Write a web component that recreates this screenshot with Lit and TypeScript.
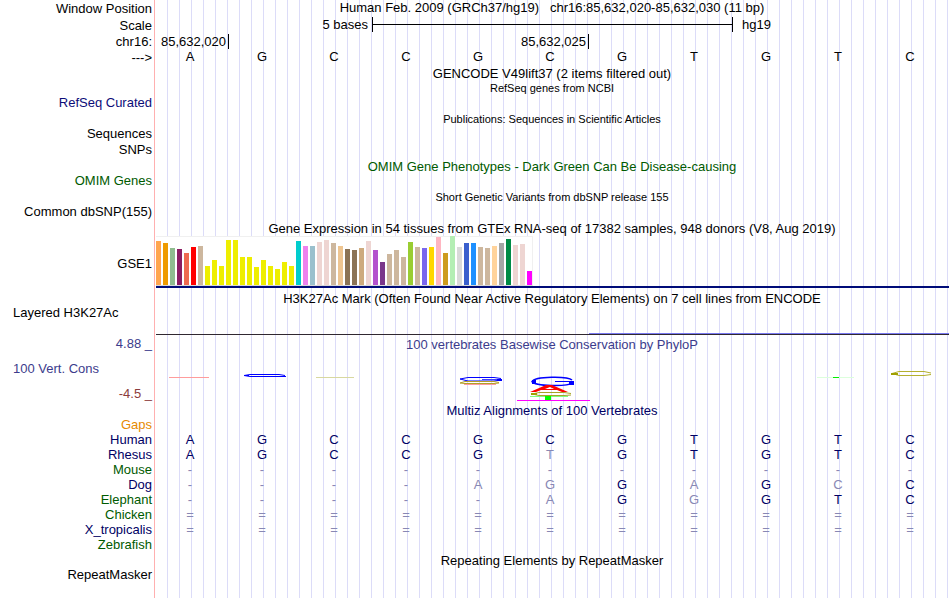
import { LitElement, html, css, svg } from "lit";
import { customElement } from "lit/decorators.js";
import { classMap } from "lit/directives/class-map.js";
import { styleMap } from "lit/directives/style-map.js";

const SEQUENCE = "AGCCGCGTGTC".split("");

// Median expression per tissue: [bar height, tissue colour]
const TISSUES: [number, string][] = [
  [44, "#ffa54f"], [42, "#ee9a00"], [37, "#8fbc8f"], [36, "#8b1c62"],
  [32, "#ee6a50"], [38, "#ff0000"], [39, "#cdb79e"], [19, "#eeee00"],
  [25, "#eeee00"], [19, "#eeee00"], [45, "#eeee00"], [45, "#eeee00"],
  [28, "#eeee00"], [28, "#eeee00"], [18, "#eeee00"], [25, "#eeee00"],
  [19, "#eeee00"], [16, "#eeee00"], [23, "#eeee00"], [19, "#eeee00"],
  [44, "#00cdcd"], [39, "#ee82ee"], [39, "#9ac0cd"], [43, "#eed5d2"],
  [45, "#eed5d2"], [42, "#cdb79e"], [39, "#eec591"], [36, "#8b7355"],
  [35, "#8b7355"], [37, "#cdaa7d"], [44, "#eed5d2"], [35, "#b452cd"],
  [23, "#7a378b"], [31, "#cdb79e"], [35, "#cdb79e"], [28, "#cdb79e"],
  [43, "#9acd32"], [38, "#cdb79e"], [37, "#7a67ee"], [38, "#ffd700"],
  [48, "#ffb6c1"], [32, "#cd9b1d"], [49, "#b4eeb4"], [38, "#d9d9d9"],
  [42, "#3a5fcd"], [42, "#1e90ff"], [38, "#cdb79e"], [37, "#cdb79e"],
  [39, "#ffd39b"], [42, "#a6a6a6"], [46, "#008b45"], [40, "#eed5d2"],
  [41, "#eed5d2"], [14, "#ff00ff"],
];

// Lower case marks a base that differs from the human one.
const SPECIES: [string, string, string][] = [
  ["Gaps", "orange", ""],
  ["Human", "navy", "AGCCGCGTGTC"],
  ["Rhesus", "navy", "AGCCGtGTGTC"],
  ["Mouse", "green", "-----------"],
  ["Dog", "navy", "----agGaGcC"],
  ["Elephant", "green", "-----aGgGTC"],
  ["Chicken", "green", "==========="],
  ["X_tropicalis", "navy", "==========="],
  ["Zebrafish", "green", ""],
];

@customElement("app-root")
export class AppRoot extends LitElement {
  static styles = css`
    :host {
      --label: 154px;
      --rest: 4px;
      display: block;
      min-height: 100vh;
      box-sizing: border-box;
      font: 13px/15px "Liberation Sans", Arial, Helvetica, sans-serif;
      color: #000;
      background:
        linear-gradient(#ffb0b0, #ffb0b0) var(--label) 0 / 1px 100% no-repeat,
        linear-gradient(#fff, #fff) 0 0 / calc(var(--label) + 12px) 100% no-repeat,
        linear-gradient(90deg, #dcdcf8 1px, transparent 1px) calc(var(--label) + 1px) 0 /
          calc((100% - var(--label) - var(--rest)) / 66) 100% repeat-x,
        #fff;
    }
    .row {
      display: grid;
      grid-template-columns: var(--label) minmax(0, 1fr);
      min-height: 15px;
    }
    .tall { min-height: 17px; }
    .medium { min-height: 16px; }
    .short { height: 14px; min-height: 0; }
    .label { padding-right: 2px; text-align: right; white-space: pre; }
    .low { padding-top: 1px; }
    .left { padding-left: 13px; text-align: left; }
    .title { text-align: center; white-space: pre; }
    .small { font-size: 11px; }
    .navy { color: #000064; }
    .blue { color: #0c0c78; }
    .slate { color: #3c3c8c; }
    .brown { color: #8c3c3c; }
    .green { color: #005a00; }
    .orange { color: #e68a00; }
    .bases {
      display: grid;
      grid-template-columns: repeat(11, minmax(0, 1fr)) var(--rest);
      text-align: center;
    }
    .unit { grid-column: 1 / span 3; text-align: right; padding-right: 2px; }
    .bar {
      grid-column: 4 / span 5;
      display: flex;
      align-items: center;
      height: 15px;
      margin: 0 -3px 0 2px;
      border: solid #000;
      border-width: 0 1px;
      box-sizing: border-box;
    }
    .bar::before { content: ""; flex: 1; height: 1px; background: #000; }
    .assembly { grid-column: 9 / span 3; text-align: left; padding-left: 12px; }
    .tick {
      grid-row: 1;
      text-align: right;
      padding-right: 2px;
      margin-right: -3px;
      border-right: 1px solid #000;
    }
    .first { grid-column: 1 / span 1; }
    .sixth { grid-column: 1 / span 6; }
    .gene { min-height: 55px; align-items: center; }
    .model {
      align-self: start;
      margin: 0 1px 0 2px;
      border-bottom: 2px solid #000c78;
    }
    .plot {
      display: flex;
      align-items: flex-end;
      gap: 2px;
      width: max-content;
      height: 50px;
      box-sizing: border-box;
      border: solid #f0f0f0;
      border-width: 1px 1px 1px 0;
      border-bottom-color: #d8d8d8;
      background: #fff;
    }
    .tissue { width: 5px; }
    .signal { min-height: 31px; }
    .wave {
      display: block;
      align-self: end;
      width: calc(100% - 3px);
      height: 30px;
      margin-left: 2px;
    }
    .cons { min-height: 50px; }
    .range {
      display: flex;
      flex-direction: column;
      justify-content: space-between;
      padding: 8px 0 2px;
    }
    .logo { display: block; width: calc(100% - var(--rest)); height: 50px; }
    .multiz { line-height: 16px; }
    table { width: 100%; table-layout: fixed; border-collapse: collapse; }
    .names { width: var(--label); }
    .spare { width: var(--rest); }
    th, td { padding: 0; height: 15px; font-weight: normal; text-align: center; }
    th { padding-right: 2px; text-align: right; }
    td { color: #000064; }
    .faint { color: #8888b4; }
  `;

  private heading(text: string, tone = "", size = "") {
    return html`<div class="row ${size}">
      <span></span>
      <div class="title ${tone}">${text}</div>
    </div>`;
  }

  private track(text: string, tone = "", size = "") {
    return html`<div class="row ${size}">
      <div class="label ${tone}">${text}</div>
    </div>`;
  }

  private logo() {
    return svg`
      <path d="M15 24.5H55" stroke="#ff9c9c" />
      <g fill="none" stroke="#0000ff">
        <path d="M131 22.5L125 21.5H96L90 22.5L96 23.5H112" />
        <path d="M112 23.5H132" />
        <path d="M347 25.5L340 24.5H314L306 26L314 28H340L347 27" />
        <path d="M328 26.5H348" stroke="#4040ff" />
        <path d="M418 27C414 23 381 23 378 28.5C381 33.500 414 33.500 418 30" stroke-width="1.500" />
        <path d="M401 28.5H420" />
      </g>
      <path d="M415 28h5v4h-5zM378 27h4v4h-4zM343 26h5v2h-5zM90 22h5v1h-5z" fill="#0000ff" />
      <path d="M162 24.5H200" stroke="#d8d8a0" />
      <path d="M345 29.5L340 28.5H311L306 30L311 30.5H340L345 30" fill="none" stroke="#b4a028" />
      <path d="M310 31.5H342" stroke="#ff9c9c" />
      <path d="M376 39l16-7h6l16 7h-6l-5-2h-16l-5 2zM391 36h9l-4-2z" fill="#ff0000" fill-rule="evenodd" />
      <path d="M417 40.500L410 39.500H385L378 41L385 42.500H410L417 42" fill="none" stroke="#a8a428" />
      <path d="M377 40h6v2h-6z" fill="#a0a000" />
      <path d="M376 43.5H414" stroke="#80ff80" />
      <path d="M391 43h6v4h-6z" fill="#00ff00" />
      <path d="M363 47.5H436" stroke="#ff00ff" />
      <path d="M663 24.5H700" stroke="#dcffdc" />
      <path d="M679 24.5H685" stroke="#00f000" />
      <path d="M777 20L770 18.5H745L738 20.5L745 22.5H770L777 21.500" fill="none" stroke="#b4b030" />
      <path d="M737 20h7v2h-7z" fill="#a0a000" />
    `;
  }

  render() {
    return html`
      <div class="row tall">
        <div class="label low">Window Position</div>
        <div class="title">Human Feb. 2009 (GRCh37/hg19)   chr16:85,632,020-85,632,030 (11 bp)</div>
      </div>
      <div class="row tall">
        <div class="label low">Scale</div>
        <div class="bases">
          <span class="unit">5 bases</span><span class="bar"></span><span class="assembly">hg19</span>
        </div>
      </div>
      <div class="row">
        <div class="label">chr16:</div>
        <div class="bases">
          <span class="tick first">85,632,020</span><span class="tick sixth">85,632,025</span>
        </div>
      </div>
      <div class="row tall">
        <div class="label low">---&gt;</div>
        <div class="bases">${SEQUENCE.map((b) => html`<span>${b}</span>`)}</div>
      </div>
      ${this.heading("GENCODE V49lift37 (2 items filtered out)")}
      ${this.heading("RefSeq genes from NCBI", "small", "short")}
      ${this.track("RefSeq Curated", "blue", "tall")}
      ${this.heading("Publications: Sequences in Scientific Articles", "small", "short")}
      ${this.track("Sequences", "", "medium")}
      ${this.track("SNPs", "", "tall")}
      ${this.heading("OMIM Gene Phenotypes - Dark Green Can Be Disease-causing", "green", "short")}
      ${this.track("OMIM Genes", "green", "tall")}
      ${this.heading("Short Genetic Variants from dbSNP release 155", "small", "short")}
      ${this.track("Common dbSNP(155)", "", "tall")}
      ${this.heading("Gene Expression in 54 tissues from GTEx RNA-seq of 17382 samples, 948 donors (V8, Aug 2019)")}
      <div class="row gene">
        <div class="label">GSE1</div>
        <div class="model">
          <div class="plot">
            ${TISSUES.map(
              ([h, c]) => html`<span class="tissue" style=${styleMap({ height: `${h}px`, background: c })}></span>`,
            )}
          </div>
        </div>
      </div>
      ${this.heading(
        "H3K27Ac Mark (Often Found Near Active Regulatory Elements) on 7 cell lines from ENCODE",
        "",
        "short",
      )}
      <div class="row signal">
        <div class="label left">Layered H3K27Ac</div>
        <svg class="wave" viewBox="0 0 793 30" preserveAspectRatio="none">
          <path d="M433 27.5H793" stroke="#7878f0" />
          <path d="M0 28.5H793" stroke="#302830" />
        </svg>
      </div>
      <div class="row tall">
        <div class="label slate">4.88 _</div>
        <div class="title slate low">100 vertebrates Basewise Conservation by PhyloP</div>
      </div>
      <div class="row cons">
        <div class="range">
          <div class="label left slate">100 Vert. Cons</div>
          <div class="label brown">-4.5 _</div>
        </div>
        <svg class="logo" viewBox="0 0 792 50" preserveAspectRatio="none">${this.logo()}</svg>
      </div>
      ${this.heading("Multiz Alignments of 100 Vertebrates", "navy multiz", "short")}
      <table>
        <colgroup>
          <col class="names" />
          <col span="11" />
          <col class="spare" />
        </colgroup>
        <tbody>
          ${SPECIES.map(
            ([name, tone, bases]) => html`<tr>
              <th scope="row" class=${tone}>${name}</th>
              ${bases
                ? bases.split("").map(
                    (b) => html`<td class=${classMap({ faint: !/[A-Z]/.test(b) })}>${b.toUpperCase()}</td>`,
                  )
                : html`<td colspan="11"></td>`}
              <td></td>
            </tr>`,
          )}
        </tbody>
      </table>
      ${this.heading("Repeating Elements by RepeatMasker", "low", "short")}
      ${this.track("RepeatMasker", "low", "medium")}
    `;
  }
}
